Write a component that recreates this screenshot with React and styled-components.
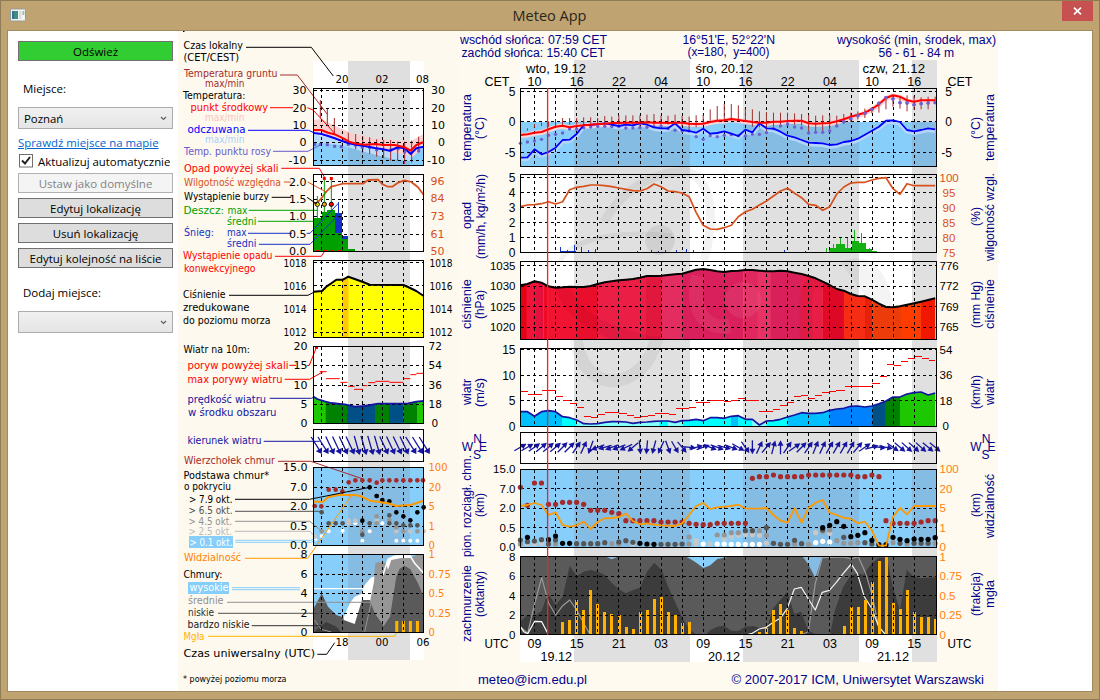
import React from 'react';
import styled, { createGlobalStyle } from 'styled-components';

const GlobalStyle = createGlobalStyle`
  *, *::before, *::after { box-sizing: border-box; }
  body { margin: 0; background: #bfa472; }
`;

/* ---------- window ---------- */

const Window = styled.div`
  width: 1100px;
  height: 700px;
  display: flex;
  flex-direction: column;
  background: #bfa472;
  border: 1px solid #8f7c56;
  padding: 0 6px 7px;
  font-family: "Open Sans", "Noto Sans", sans-serif;
  font-size: 12px;
  color: #000;
  overflow: hidden;
`;

const TitleBar = styled.header`
  height: 29px;
  flex: none;
  display: grid;
  grid-template-columns: 46px 1fr 31px;
  align-items: start;
`;

const AppIcon = styled.svg`
  display: block;
  margin: 7px 0 0 3px;
`;

const Title = styled.h1`
  margin: 0;
  padding-right: 16px;
  font-size: 14.5px;
  font-weight: 400;
  line-height: 30px;
  text-align: center;
  color: #2b251a;
`;

const CloseButton = styled.button`
  width: 31px;
  height: 20px;
  padding: 0;
  border: 0;
  display: grid;
  place-items: center;
  background: #c75050;
`;

const Client = styled.main`
  flex: 1;
  display: flex;
  align-items: flex-start;
  min-height: 0;
  background: #fff;
  border: 1px solid #a28b60;
`;

/* ---------- sidebar ---------- */

const Sidebar = styled.aside`
  width: 170px;
  flex: none;
  display: flex;
  flex-direction: column;
  padding: 10px 5px 0 10px;
`;

const Button = styled.button`
  height: 20px;
  padding: 0;
  margin-bottom: 5px;
  border: 1px solid ${(p) => (p.disabled ? '#adb2b5' : '#707070')};
  background: ${(p) => (p.$primary ? '#32cd32' : p.disabled ? '#f4f4f4' : '#dddddd')};
  color: ${(p) => (p.disabled ? '#838383' : '#000')};
  font: 400 ${(p) => p.$size || 11.5}px/17px "Open Sans", "Noto Sans", sans-serif;
  white-space: nowrap;
`;

const Label = styled.div`
  height: 20px;
  line-height: 20px;
  padding-left: 5px;
  font-size: 11.5px;
  margin-top: ${(p) => p.$top}px;
  margin-bottom: ${(p) => p.$bottom}px;
`;

const Select = styled.div`
  height: 22px;
  padding: 0 5px;
  display: flex;
  align-items: center;
  justify-content: space-between;
  border: 1px solid #acacac;
  background: linear-gradient(#f0f0f0, #e5e5e5);
  font-size: 11.4px;
`;

const MapLink = styled.a`
  height: 18px;
  margin-top: 5px;
  line-height: 18px;
  font-size: 11.4px;
  color: #0066cc;
  text-decoration: underline;
  white-space: nowrap;
`;

const CheckRow = styled.label`
  height: 16px;
  margin: 1px 0 4px;
  padding-left: 1px;
  display: flex;
  align-items: center;
  gap: 5px;
  font-size: 11.4px;
  white-space: nowrap;
`;

const CheckBox = styled.svg`
  flex: none;
`;

const Chevron = () => (
  <svg width="7" height="5" viewBox="0 0 7 5">
    <path d="M1 1l2.5 2.5L6 1" fill="none" stroke="#606060" strokeWidth="1.2" />
  </svg>
);

/* ---------- diagrams ---------- */

const Diagram = styled.svg`
  flex: none;
  display: block;
  background: ${(p) => p.$paper};
`;

const LegendText = styled.text`
  font-family: "DejaVu Sans", sans-serif;
  font-size: ${(p) => p.$size || 11}px;
`;

const ChartText = styled.text`
  font-family: "Liberation Sans", sans-serif;
  font-size: ${(p) => p.$size || 12}px;
`;

const NAVY = '#00008b';
const SKY = '#87cefa';
const SKY_NIGHT = '#84bce4';
const ORANGE = '#ff7f0e';
const RUST = '#d8501c';

const third = (ox, oy, text) => {
  const n = text.trim().split(/\s+/).map(Number);
  const out = [];
  for (let i = 0; i < n.length; i += 2) out.push([ox + n[i] / 3, oy + n[i + 1] / 3]);
  return out;
};
const str = (pts) => pts.map((p) => p.map((v) => v.toFixed(1)).join(',')).join(' ');
const hourX = (i) => 520.4 + 7.03 * i;
const hourly = (oy, text) => text.split(',').map((v, i) => [hourX(i), oy + Number(v) / 3]);

const Line = ({ p, c, w = 1, ...rest }) => (
  <polyline points={str(p)} fill="none" stroke={c} strokeWidth={w} strokeLinejoin="round" {...rest} />
);
const Area = ({ p, base, ...rest }) => (
  <polygon points={str([[p[0][0], base], ...p, [p[p.length - 1][0], base]])} {...rest} />
);
const Shape = ({ p, c }) => <polygon points={str(p)} fill={c} />;

const Grid = ({ x0, x1, y0, y1, xs, ys }) => (
  <g stroke="#000" strokeWidth="1" strokeDasharray="3 3" shapeRendering="crispEdges">
    {xs.map((x) => <line key={'x' + x} x1={x} x2={x} y1={y0} y2={y1} />)}
    {ys.map((y) => <line key={'y' + y} x1={x0} x2={x1} y1={y} y2={y} />)}
  </g>
);
const Frame = ({ x0, x1, y0, y1 }) => (
  <rect x={x0} y={y0} width={x1 - x0} height={y1 - y0} fill="none" stroke="#000" shapeRendering="crispEdges" />
);
const Sky = ({ x0, x1, y0, y1, nights }) => (
  <g shapeRendering="crispEdges">
    <rect x={x0} y={y0} width={x1 - x0} height={y1 - y0} fill={SKY} />
    {nights.map(([a, b]) => <rect key={a} x={a} y={y0} width={Math.min(b, x1) - a} height={y1 - y0} fill={SKY_NIGHT} />)}
  </g>
);
const Arrow = ({ x, y, angle, len = 14, head = 3 }) => (
  <g transform={`translate(${x} ${y}) rotate(${-angle})`}>
    <line x1={-len / 2} x2={len / 2 - 3} y1="0" y2="0" stroke="#1414a0" strokeWidth="1.3" />
    <path d={`M${len / 2} 0L${len / 2 - 5.5} ${-head}V${head}Z`} fill="#1414a0" />
  </g>
);
const Stripes = ({ ox, items, y0, y1 }) =>
  items.map(([a, b, c]) => (
    <rect key={ox + '-' + a} x={ox + a / 3} width={(b - a) / 3 + 0.3} y={y0} height={y1 - y0} fill={c} />
  ));

const Ticks = ({ x, items, anchor = 'end', c = '#000', size = 12, Font = ChartText }) =>
  items.map(([label, y, dx = 0]) => (
    <Font key={label + y} x={x + dx} y={y + size * 0.36} textAnchor={anchor} fill={c} $size={size}>{label}</Font>
  ));

const Upright = ({ x, y0, y1, children, size = 12 }) => (
  <ChartText
    transform={`rotate(-90 ${x + 4} ${y1})`} x={x + 4} y={y1} fill={NAVY} $size={size}
    textLength={y1 - y0} lengthAdjust="spacingAndGlyphs"
  >{children}</ChartText>
);

/* ---------- legend diagram ---------- */

const LEGEND_TEXT = [
  ['Czas lokalny', 183.5, 243, 49, '#000'],
  ['(CET/CEST)', 183.5, 239, 61, '#000'],
  ['Temperatura gruntu', 184, 277.5, 77, '#a52a2a'],
  ['max/min', 205, 244.5, 87, '#a52a2a', 10],
  ['Temperatura:', 183, 245.5, 99, '#000'],
  ['punkt środkowy', 190.5, 268, 111, '#f00'],
  ['max/min', 205, 244.5, 121, '#f8c4c0', 10],
  ['odczuwana', 187.5, 245.5, 133, '#00f'],
  ['max/min', 205, 244.5, 143, '#a8d0f8', 10],
  ['Temp. punktu rosy', 184, 271, 155, '#6a5acd'],
  ['Opad powyżej skali', 184, 278.5, 172, '#f00'],
  ['Wilgotność względna', 184, 281, 186, RUST],
  ['Wystąpienie burzy', 184, 269, 200, '#000'],
  ['Deszcz:', 183.5, 224, 214, '#00a000'],
  ['max', 227.5, 247.5, 214, '#00a000'],
  ['średni', 227, 256.5, 225, '#00a000'],
  ['Śnieg:', 184, 214, 236, '#1432c8'],
  ['max', 227, 246.5, 236, '#1432c8'],
  ['średni', 227, 256.5, 247, '#1432c8'],
  ['Wystąpienie opadu', 183, 272.5, 259, '#f00'],
  ['konwekcyjnego', 184, 255.5, 272, '#f00'],
  ['Ciśnienie', 183, 225.5, 298, '#000'],
  ['zredukowane', 183, 249.5, 311, '#000'],
  ['do poziomu morza', 183, 270.5, 324, '#000'],
  ['Wiatr na 10m:', 183.5, 250, 353, '#000'],
  ['poryw powyżej skali', 187.5, 288.5, 369, '#f00'],
  ['max porywy wiatru', 187.5, 282.5, 383, '#f00'],
  ['prędkość wiatru', 187.5, 266, 403, '#1414a0'],
  ['w środku obszaru', 188, 276.5, 416, '#1414a0'],
  ['kierunek wiatru', 187.5, 261.5, 444, '#1414a0'],
  ['Wierzchołek chmur', 184, 275, 464, '#a52a2a'],
  ['Podstawa chmur*', 183.5, 269, 479, '#000'],
  ['o pokryciu', 184, 231, 490, '#000'],
  ['> 7.9 okt.', 189, 232.5, 503, '#000', 10.5],
  ['> 6.5 okt.', 188.5, 232.5, 514, '#505050', 10.5],
  ['> 4.5 okt.', 188.5, 232, 525, '#909090', 10.5],
  ['> 2.5 okt.', 188.5, 232, 535, '#bababa', 10.5],
  ['> 0.1 okt.', 189.5, 232.5, 546, '#fff', 10.5],
  ['Widzialność', 184, 241, 561, '#ff7f00'],
  ['Chmury:', 183.5, 222.5, 578, '#000'],
  ['wysokie', 189.5, 228.5, 591, '#fff'],
  ['średnie', 188, 223.5, 604, '#909090'],
  ['niskie', 188, 214, 616, '#303030'],
  ['bardzo niskie', 187.5, 249.5, 628, '#202020'],
  ['Mgła', 183.5, 204.5, 640, '#ffb400'],
  ['Czas uniwersalny (UTC)', 183.5, 315, 657, '#000'],
  ['* powyżej poziomu morza', 183, 286.5, 682, '#000', 9],
];

const MX0 = 313.5;
const MX1 = 423.5;
const M_XS = [321.5, 342.5, 362.5, 382.5, 403.5];
const M_NIGHT = [[348, 410]];

const M_PANELS = [
  { y0: 88.5, y1: 165.5, ys: [90.5, 108.5, 125.5, 142.5, 160.5] },
  { y0: 174.5, y1: 251.5, ys: [181.5, 199.5, 216.5, 234.5] },
  { y0: 260.5, y1: 337.5, ys: [262.5, 285.5, 309.5, 332.5] },
  { y0: 346.5, y1: 423.5, ys: [365.5, 385.5, 404.5] },
  { y0: 429.5, y1: 461.5, ys: [] },
  { y0: 467.5, y1: 545.5, ys: [487.5, 506.5, 526.5] },
  { y0: 554.5, y1: 632.5, ys: [574.5, 593.5, 613.5] },
];

const m1 = (t) => third(178, 30, t);
const m2 = (t) => third(178, 160, t);
const m3 = (t) => third(178, 335, t);
const m4 = (t) => third(178, 500, t);

const M_RED = m1('407 300 430 300 450 308 470 313 490 322 513 335 535 341 560 344 590 342 620 345 650 345 680 352 698 362 715 345 737 336');
const M_BLUE = m1('407 309 430 312 450 318 470 325 490 332 513 340 535 344 560 348 590 354 615 358 635 362 660 352 680 355 698 372 715 355 737 350');
const M_PRESS = m2('407 395 432 393 445 380 460 370 475 359 495 359 511 350 530 357 555 366 575 374 676 375 690 381 715 393 737 408');
const M_WIND = m3('407 185 418 192 440 199 460 204 500 208 530 215 560 213 600 206 690 205 715 200 737 198');

const Dots = ({ pts, c, r = 2.3 }) => pts.map(([x, y], i) => <circle key={i} cx={x} cy={y} r={r} fill={c} />);

const MiniBars = [[427, 210, 265], [448, 235, 285], [469, 264, 310], [511, 308, 345], [533, 312, 358], [554, 318, 368], [575, 322, 372], [596, 328, 380], [617, 330, 384], [638, 330, 392], [659, 335, 392], [680, 335, 402], [701, 332, 398], [722, 320, 368]];

function LegendDiagram() {
  return (
    <Diagram $paper="#fdf9ee" width="280" height="660" viewBox="178 31 280 660">
      <rect x="183" y="31" width="1.5" height="1" />
      <rect x="313" y="61" width="111" height="599" fill="#fff" />
      <rect x="348" y="61" width="62" height="599" fill="#dfdfdf" />

      {/* temperature */}
      <Sky x0={MX0} x1={MX1} y0={142.5} y1={165.5} nights={M_NIGHT} />
      <Shape c="#f8d0d0" p={m1('407 270 430 266 455 280 490 296 530 312 580 324 640 330 700 333 737 312 737 350 700 385 640 368 560 358 490 335 450 320 407 306')} />
      <Shape c="#b8dcfa" p={m1('407 312 450 322 490 336 560 350 640 366 700 378 700 394 640 386 560 366 490 346 407 336')} />
      {MiniBars.map(([x, a, b]) => <line key={x} x1={178 + x / 3} x2={178 + x / 3} y1={30 + a / 3} y2={30 + b / 3} stroke="#a52a2a" />)}
      {m1('410 343 428 343 448 344 470 349 490 350 511 343 533 345 553 352 575 352 596 359 638 360 660 356 680 366 722 362').map(([x, y], i) => <rect key={i} x={x - 1.5} y={y - 1.5} width="3" height="3" fill="#6a5acd" />)}

      {/* precipitation */}
      <g shapeRendering="crispEdges">
        {[[407, 431, 174], [431, 447, 157], [447, 471, 150], [471, 492, 219], [492, 510, 237], [510, 531, 267]].map(([a, b, y]) => (
          <rect key={a} x={178 + a / 3} y={160 + y / 3} width={(b - a) / 3} height={(274 - y) / 3} fill="#00a000" />
        ))}
        <rect x="335" y="213" width="7" height="20" fill="#1432c8" />
        <rect x="342" y="236" width="6" height="3" fill="#1432c8" />
      </g>

      {/* pressure */}
      <Area p={M_PRESS} base={337} fill="#ff0" />
      <rect x="342.5" y="278" width="6" height="59" fill="#ffc800" />

      {/* wind speed */}
      <clipPath id="miniWind"><Area p={M_WIND} base={423.5} /></clipPath>
      <g clipPath="url(#miniWind)">
        <Stripes ox={178} y0={390} y1={424} items={[[407, 443, '#1ec800'], [443, 507, '#008200'], [507, 591, '#005088'], [591, 633, '#008200'], [633, 676, '#005088'], [676, 717, '#008200'], [717, 738, '#1ec800']]} />
      </g>

      {/* cloud base */}
      <Sky x0={MX0} x1={MX1} y0={467.5} y1={545.5} nights={M_NIGHT} />

      {/* cloud cover */}
      <Sky x0={MX0} x1={MX1} y0={554.5} y1={632.5} nights={M_NIGHT} />
      <Shape c="#fff" p={m4('495 397 498 350 515 310 530 290 550 282 560 255 580 232 615 225 630 175 650 168 697 166 710 190 737 220 737 397')} />
      <Shape c="#969696" p={m4('580 397 575 310 588 245 592 190 600 186 624 190 630 210 640 180 670 174 697 174 715 165 737 165 737 397')} />
      <Shape c="#5a5a5a" p={m4('407 325 418 305 431 280 450 320 475 345 495 352 497 360 530 372 552 300 575 300 590 340 617 378 636 350 655 230 665 206 680 197 697 208 720 250 737 290 737 397 407 397')} />
      <Shape c="#3c3c3c" p={m4('407 397 425 380 445 366 475 380 490 397')} />
      <Line c="#969696" p={m4('409 360 430 388 460 396')} />
      <Line c="#969696" p={m4('560 395 570 350 580 305')} />
      <Line c="#fff" w={1.5} p={m4('615 225 630 178 650 168 697 168 710 190 737 220')} />
      {[656, 676, 697, 718].map((x) => <rect key={x} x={178 + x / 3 - 1.4} y="621" width="3" height="11.5" fill="#ffb400" />)}

      {M_PANELS.map((p) => <Grid key={p.y0} {...p} x0={MX0} x1={MX1} xs={M_XS} />)}

      <Line p={M_BLUE} c="#00f" w={2} />
      <Line p={M_RED} c="#f00" w={2} />

      <Line c={RUST} w={1.8} p={m2('407 130 418 128 430 115 445 95 460 80 480 75 495 71 555 71 570 60 600 59 612 72 630 80 643 80 660 68 680 61 700 66 720 82 737 105')} />
      <g stroke="#00a000">
        {[[418, 108, 174], [439, 57, 157], [460, 57, 150]].map(([x, a, b]) => <line key={x} x1={178 + x / 3} x2={178 + x / 3} y1={160 + a / 3} y2={160 + b / 3} />)}
      </g>
      <line x1="338.5" x2="338.5" y1="202" y2="214" stroke="#1432c8" />
      {[439, 460].map((x) => <rect key={x} x={178 + x / 3 - 1.5} y="177" width="3" height="3" fill="#f00" />)}
      {[[418, '#ff0'], [439, '#ffa520'], [460, '#f00']].map(([x, c]) => <circle key={x} cx={178 + x / 3} cy="204.3" r="2.1" fill={c} stroke="#000" />)}
      {[418, 441, 462, 485].map((x) => <rect key={x} x={178 + x / 3 - 1.5} y="250" width="3.5" height="1.6" fill="#f00" />)}

      <Line p={M_PRESS} c="#000" w={2} />
      <Line p={M_WIND} c="#1414a0" w={1.8} />
      <g stroke="#f00">
        {[[425, 446, 110], [444, 485, 131], [487, 508, 142], [510, 530, 154], [528, 555, 163], [555, 568, 152], [571, 592, 143], [592, 634, 139], [634, 676, 142], [676, 697, 131], [697, 715, 119], [715, 737, 115]].map(([a, b, y]) => (
          <line key={a} x1={178 + a / 3} x2={178 + b / 3} y1={335 + y / 3} y2={335 + y / 3} />
        ))}
      </g>
      <rect x="315" y="346" width="3" height="3" fill="#f00" />
      {Array.from({ length: 17 }, (_, i) => (
        <Arrow key={i} x={316.5 + i * 6.75} y={445.5} len={20} head={3.6} angle={i < 2 ? -58 : i > 13 ? -58 : i > 5 && i < 10 ? -74 : -65} />
      ))}

      <Dots c="#fff" r={2} pts={m4('412 118 431 108 452 94 494 92 532 70 575 94 613 70 553 122 655 122 676 122 697 122 718 122')} />
      <Dots c="#c4c4c4" pts={m4('411 110 512 62 512 70 532 62 596 62 634 72 655 94 697 94 737 94')} />
      <Dots c="#969696" pts={m4('431 94 553 94 596 49 596 70 634 60 676 94 718 94 655 82')} />
      <Dots c="#555" pts={m4('431 37 452 70 473 70 494 70 553 104 575 70 634 46 634 70 655 70 676 76 697 76 718 76 613 4 596 -12')} />
      <Dots c="#000" pts={m4('575 -38 596 -12 613 0 634 4 553 62 655 37 676 49 697 61 718 37 737 22')} />
      <Dots c="#a52a2a" pts={m3('410 513 430 514 452 464 473 464 493 469 512 442 532 436 553 436 575 436 596 443 613 436 634 436 655 436 676 436 697 436 718 436 735 436')} />
      <Line c="#ff9900" w={2} p={m3('407 500 435 500 450 487 480 480 530 480 550 484 575 497 600 500 630 505 655 513 700 509 737 497')} />

      {/* leader lines */}
      <Line c="#000" p={m1('204 52 400 52 466 138')} />
      <Line c="#a52a2a" p={m1('306 135 358 135 425 223 448 253')} />
      <Line c="#f00" p={m1('276 233 345 233')} />
      <Line c="#f00" p={m1('388 233 405 240 470 310')} />
      <Line c="#00f" p={m1('210 301 392 301 407 308')} />
      <Line c="#6a5acd" p={m1('285 364 390 364 430 343')} />
      <Line c="#f00" p={m1('310 415 424 415 439 441')} />
      <Line c={RUST} p={m2('318 66 338 66')} />
      <Line c={RUST} p={m2('389 66 445 96')} />
      <Line c="#000" p={m2('281 112 340 112')} />
      <Line c="#000" p={m2('387 112 418 133')} />
      <Line c="#00a000" p={m2('212 151 418 151')} />
      <Line c="#00a000" p={m2('240 184 410 184')} />
      <Line c="#1432c8" p={m2('210 220 342 220')} />
      <Line c="#1432c8" p={m2('386 220 396 220 481 130')} />
      <Line c="#1432c8" p={m2('243 253 396 253 474 172')} />
      <Line c="#f00" p={m2('291 289 430 289 441 272')} />
      <Line c="#000" p={m2('153 406 390 406 407 397')} />
      <Line c="#f00" p={m3('334 91 354 91')} />
      <Line c="#f00" p={m3('387 92 394 91 415 38')} />
      <Line c="#f00" p={m3('320 133 395 133 435 110')} />
      <Line c="#1414a0" p={m3('275 190 400 190 407 187')} />
      <Line c="#1414a0" p={m3('257 319 425 319')} />
      <Line c="#a52a2a" p={m3('300 379 398 379 553 431')} />
      <Line c="#000" p={m3('171 493 395 493 575 457')} />
      <Line c="#505050" p={m4('171 34 422 34 431 37')} />
      <Line c="#909090" p={m4('171 64 395 64 430 92')} />
      <Line c="#bababa" p={m4('171 94 396 94 410 110')} />
      <rect x="189" y="536" width="44" height="12" fill={SKY} />
      <Line c={SKY} p={m4('172 121 398 121 412 115')} />
      <Line c={SKY} p={m4('172 127 400 127 412 120')} />
      <Line c="#ff9900" p={m4('201 175 389 175 520 -13')} />
      <rect x="188" y="582" width="41" height="12" fill={SKY} />
      <Line c={SKY} p={m4('162 263 366 263')} />
      <Line c={SKY} p={m4('162 269 366 269')} />
      <Line c="#fff" w={1.2} p={m4('387 266 560 266')} />
      <Line c="#909090" p={m4('147 307 580 307')} />
      <Line c="#505050" p={m4('120 340 430 340')} />
      <Line c="#303030" p={m4('221 377 430 377')} />
      <Line c="#ffb400" p={m4('90 409 650 409 656 396')} />
      <Line c="#000" p={m4('418 463 446 463 470 428')} />

      {M_PANELS.map((p) => <Frame key={p.y0} {...p} x0={MX0} x1={MX1} />)}
      {LEGEND_TEXT.map(([t, a, b, y, c, s]) => (
        <LegendText key={t + y} x={a} y={y} fill={c} $size={s} textLength={b - a} lengthAdjust="spacingAndGlyphs">{t}</LegendText>
      ))}

      <g>
        <Ticks Font={LegendText} size={11} x={306.5} items={[['30', 90.5], ['20', 108], ['10', 125], ['0', 142.5], ['-10', 160], ['2.0', 181.7], ['1.5', 199], ['1.0', 216.5], ['0.5', 234], ['0.0', 251]]} />
        <Ticks Font={LegendText} size={11} x={445} items={[['30', 90.5], ['20', 108], ['10', 125], ['0', 142.5], ['-10', 160]]} />
        <Ticks Font={LegendText} size={11} x={430.5} anchor="start" c={RUST} items={[['96', 181], ['84', 198.5], ['73', 216], ['61', 234], ['50', 251]]} />
        {[262.5, 285.5, 309, 332].map((y, i) => (
          <React.Fragment key={y}>
            <LegendText $size={11} x="283.5" y={y + 4} textLength="23" lengthAdjust="spacingAndGlyphs">{1018 - 2 * i}</LegendText>
            <LegendText $size={11} x="429.5" y={y + 4} textLength="23" lengthAdjust="spacingAndGlyphs">{1018 - 2 * i}</LegendText>
          </React.Fragment>
        ))}
        <Ticks Font={LegendText} size={11} x={307.5} items={[['20', 346.5], ['15', 365.5], ['10', 385.5], ['5', 404.5], ['0', 423.5], ['15.0', 467.5], ['7.0', 487.5], ['2.0', 506.5], ['0.5', 526.3], ['0.0', 545], ['8', 554.5], ['6', 574], ['4', 593.5], ['2', 613.5], ['0', 632.5]]} />
        <Ticks Font={LegendText} size={10.5} x={428.5} anchor="start" items={[['72', 346], ['54', 365.5], ['36', 385.5], ['18', 404.5], ['0', 423.5, 3]]} />
        <Ticks Font={LegendText} size={10} x={428.5} anchor="start" c={ORANGE} items={[['100', 467.5], ['20', 487.5], ['5', 506.5], ['1', 526.5], ['0', 545.5], ['1', 554.5], ['0.75', 574.5], ['0.5', 593.5], ['0.25', 613.5], ['0', 632.5]]} />
        {[['20', 342, 78.5], ['02', 382, 78.5], ['08', 422.5, 78.5], ['18', 342, 641.7], ['00', 382, 641.7], ['06', 423, 641.7]].map(([t, x, y]) => (
          <LegendText key={t} $size={11} x={x} y={y + 4} textAnchor="middle" textLength="13" lengthAdjust="spacingAndGlyphs">{t}</LegendText>
        ))}
      </g>
    </Diagram>
  );
}

/* ---------- forecast diagram ---------- */

const FX0 = 520.5;
const FX1 = 936.5;
const F_XS = Array.from({ length: 19 }, (_, k) => Math.round(534 + 21.1 * k) + 0.5);
const F_NIGHTS = [[574, 690], [743, 859], [912, 937]];
const F_PANELS = [
  { y0: 88.5, y1: 166.5, ys: [91.5, 121.5, 152.5] },
  { y0: 174.5, y1: 252.5, ys: [177.5, 192.5, 207.5, 222.5, 237.5] },
  { y0: 261.5, y1: 339.5, ys: [265.5, 286.5, 306.5, 327.5] },
  { y0: 348.5, y1: 426.5, ys: [349.5, 375.5, 400.5] },
  { y0: 432.5, y1: 463.5, ys: [] },
  { y0: 469.5, y1: 547.5, ys: [488.5, 508.5, 527.5] },
  { y0: 556.5, y1: 634.5, ys: [576.5, 595.5, 615.5] },
];

const TEMP = hourly(30, '315,313,308,306,298,290,287,292,288,286,284,282,281,279,279,278,278,278,277,278,278,279,278,278,281,282,281,276,272,271,267,270,273,276,278,278,275,275,273,272,272,280,281,280,279,274,268,260,254,248,237,223,204,196,200,211,215,211,211,211');
const FELT = hourly(30, '383,382,358,373,366,353,330,329,312,285,285,282,280,284,288,284,286,280,284,292,295,295,280,300,303,308,296,311,309,304,311,318,299,307,280,295,296,305,317,322,330,338,339,340,345,343,336,333,326,314,302,290,272,271,276,300,304,300,295,298');
const DEW = hourly(30, '340,336,333,328,316,313,309,297,297,293,291,289,289,290,290,294,294,293,292,290,288,296,301,303,303,320,328,317,320,316,314,317,318,313,313,308,296,288,282,291,294,309,307,307,303,288,275,266,257,250,238,220,203,207,218,219,224,221,219,218');
const HUMID = hourly(30, '530,525,524,521,515,522,515,479,472,469,465,465,467,470,474,478,482,483,476,462,470,483,485,489,500,547,586,597,598,593,586,560,545,538,525,513,498,483,475,490,503,523,526,541,530,492,471,459,457,457,450,445,443,476,493,461,467,467,467,467');
const PRESS = hourly(255, '91,87,79,83,94,98,97,95,96,96,93,87,82,79,76,74,72,68,63,63,62,60,58,56,50,44,42,45,49,51,48,47,45,45,47,49,49,47,49,53,57,63,70,80,90,102,107,117,123,124,134,146,156,157,154,149,145,140,135,130');
const WIND = hourly(255, '470,470,484,470,467,470,485,488,495,506,507,506,502,500,500,501,505,502,501,499,498,498,502,497,496,493,497,488,488,490,484,482,493,493,510,498,497,493,486,480,473,475,475,473,466,462,460,454,453,456,453,446,438,426,426,417,413,411,420,414');
const VIS = hourly(460, '138,135,129,135,165,157,195,200,196,185,207,186,175,174,171,161,183,193,190,194,196,197,198,190,165,138,129,147,142,140,138,134,145,146,146,144,165,182,188,145,188,143,128,120,158,165,174,176,190,185,212,257,257,170,144,163,138,138,138,138');
const TOPS = hourly(460, '82,136,69,69,133,133,127,127,127,133,151,151,151,157,161,182,182,182,182,182,186,186,186,186,190,193,194,194,190,190,190,190,190,55,50,50,45,50,50,50,50,45,45,45,45,45,45,45,50,50,45,50,182,190,190,190,190,186,182,182');

const GROUND = [
  [1, 295, 302], [2, 282, 292], [3, 278, 288], [4, 274, 290], [5, 268, 290], [6, 264, 288], [7, 264, 284], [8, 264, 284], [9, 262, 286], [10, 262, 284], [11, 264, 282], [12, 258, 284], [13, 260, 288], [14, 256, 288], [15, 256, 286], [16, 256, 286], [17, 256, 290], [18, 254, 284], [19, 252, 286], [20, 257, 284], [21, 257, 284], [22, 254, 286], [23, 257, 288], [24, 260, 306], [25, 256, 292], [26, 254, 282], [27, 238, 272], [28, 228, 275], [29, 222, 274], [30, 222, 272], [31, 226, 274], [32, 236, 276], [33, 238, 290], [34, 244, 292], [35, 246, 306], [36, 248, 290], [37, 248, 288], [38, 248, 286], [39, 250, 284], [40, 252, 286], [41, 255, 310], [42, 257, 304], [43, 256, 304], [44, 256, 304], [45, 257, 290], [46, 252, 282], [47, 248, 276], [48, 244, 268], [49, 236, 264], [50, 232, 250], [51, 214, 248], [52, 205, 238], [53, 198, 230], [54, 200, 236], [55, 196, 244], [56, 198, 240], [57, 202, 238], [58, 200, 238], [59, 200, 222],
];

const K = '#000';
const D = '#555';
const G = '#969696';
const L = '#c8c8c8';
const W = '#fff';
const CLOUD_BASE = [
  [0, 252, G], [0, 240, D], [1, 252, L], [1, 245, D], [1, 232, K], [2, 252, L], [2, 243, D], [3, 250, L], [3, 239, D], [4, 252, D], [4, 239, K],
  [5, 252, G], [5, 240, D], [5, 228, K], [6, 250, K], [7, 250, K], [8, 251, D], [9, 251, D], [10, 251, D], [11, 251, D], [12, 248, D], [13, 251, G],
  [14, 252, G], [14, 246, D], [15, 242, D], [16, 252, L], [16, 247, D], [17, 250, K], [18, 252, K], [19, 253, K], [20, 253, D], [21, 253, D], [22, 253, D], [23, 252, D],
  [24, 252, G], [24, 231, G], [25, 252, L], [25, 242, L], [26, 252, W], [27, 252, L], [28, 252, W], [28, 225, G], [29, 252, W], [29, 236, L], [29, 225, G],
  [30, 253, W], [30, 230, L], [30, 218, G], [31, 253, W], [31, 226, L], [31, 218, G], [32, 253, W], [32, 224, L], [32, 212, D], [33, 253, W], [33, 224, L], [33, 212, D], [34, 253, W], [34, 226, L], [34, 212, G],
  [35, 250, L], [35, 226, G], [35, 203, D], [36, 250, D], [37, 253, D], [38, 253, D], [39, 252, G], [39, 241, D], [40, 251, D], [41, 253, G], [42, 248, W], [42, 218, L],
  [43, 244, W], [43, 214, G], [43, 210, D], [43, 203, K], [44, 246, W], [44, 220, L], [44, 210, G], [44, 196, K], [45, 242, G], [45, 185, K], [46, 250, G], [46, 232, D], [46, 199, K],
  [47, 250, G], [47, 230, K], [48, 248, G], [48, 226, K], [49, 248, D], [49, 218, K], [50, 252, D], [50, 241, K], [51, 254, K], [52, 254, K], [53, 248, G], [53, 232, K], [54, 250, D], [54, 238, K],
  [55, 252, G], [55, 242, K], [56, 250, D], [56, 237, K], [57, 250, D], [57, 238, K], [58, 250, D], [58, 238, K], [59, 250, G], [59, 233, K],
];

const ANGLES = [30, 30, 35, 40, 40, 40, 45, 45, 55, 65, 250, 200, 195, 200, 200, 205, 220, 275, 265, 255, 245, 290, 300, 310, -5, 15, 20, -20, -20, -15, -20, -30, -55, -90, 65, 50, 75, 90, 55, 35, 45, 55, 68, 65, 60, 60, 60, 60, 50, 35, 15, -5, -12, -35, -40, -42, -42, -42, -40, -40];

const GUSTS_A = [[193, 215, 409], [215, 257, 418], [257, 299, 406], [299, 320, 424], [320, 341, 436], [341, 362, 445], [362, 383, 457], [383, 404, 484], [404, 425, 487], [425, 446, 478], [446, 490, 472], [490, 512, 475], [512, 533, 481], [533, 554, 487], [554, 575, 484], [575, 596, 481], [596, 638, 475], [638, 659, 478], [659, 700, 460], [700, 721, 457], [721, 763, 442], [763, 805, 437]];
const GUSTS_B = [[13, 34, 439], [34, 55, 436], [55, 76, 430], [76, 118, 436], [118, 160, 469], [160, 181, 463], [181, 202, 451], [202, 223, 442], [223, 244, 424], [244, 265, 421], [265, 286, 430], [286, 307, 421], [307, 328, 412], [328, 349, 409], [349, 374, 406], [374, 457, 394], [457, 479, 385], [479, 500, 364], [500, 521, 328], [521, 542, 331], [542, 563, 319], [563, 584, 310], [584, 605, 304], [605, 626, 310], [626, 646, 316]];

const FOG = [
  ...third(456, 460, '320 485 341 481 362 421 383 450 404 391 425 433 446 455 467 462 491 466 511 500 533 508 553 455 574 450 595 418 617 412 638 455 659 466 680 490 700 485'),
  ...third(720, 460, '118 516 139 503 160 451 181 433 202 451 223 505 244 514 373 499 394 440 415 440 436 421 457 365 478 304 499 292 520 430 541 448 562 391 583 455 604 472 625 472 645 478'),
];

const a6 = (t) => third(456, 460, t);
const b6 = (t) => third(720, 460, t);

const Compass = ({ x }) => (
  <g fill={NAVY} textAnchor="middle">
    <ChartText x={x - 9.5} y="450.5">W</ChartText>
    <ChartText x={x + 0.5} y="443">N</ChartText>
    <ChartText x={x + 6} y="450.5">E</ChartText>
    <ChartText x={x} y="459">S</ChartText>
  </g>
);

const HEADINGS = [
  ['wschód słońca: 07:59 CET', 460, 607, 44],
  ['zachód słońca: 15:40 CET', 461.5, 605, 56.5],
  ["16°51'E, 52°22'N", 682.5, 775, 44],
  ['(x=180,\u00a0 y=400)', 687.5, 769.5, 56],
  ['wysokość (min, środek, max)', 837, 996, 44],
  ['56 - 61 - 84 m', 878.5, 954, 56.5],
  ['meteo@icm.edu.pl', 478, 587, 684],
  ['© 2007-2017 ICM, Uniwersytet Warszawski', 731.5, 984, 684],
];

const DATES = [
  ['wto, 19.12', 526, 586, 73], ['śro, 20.12', 695.5, 753, 73], ['czw, 21.12', 862.5, 925, 73],
  ['CET', 484.5, 509.5, 85.5], ['CET', 947.5, 972.5, 85.5],
  ['UTC', 484.5, 508.5, 648], ['UTC', 947.5, 971.5, 648],
  ['19.12', 540.5, 572, 661], ['20.12', 708, 740, 661], ['21.12', 877, 909, 661],
];

function ForecastDiagram() {
  return (
    <Diagram $paper="#fffaf0" width="540" height="660" viewBox="458 31 540 660">
      <rect x="520" y="60" width="417" height="602" fill="#fff" />
      {F_NIGHTS.map(([a, b]) => <rect key={a} x={a} y="60" width={b - a} height="602" fill="#e0e0e0" />)}

      <g fill="none" stroke="#000" strokeOpacity="0.05">
        <path d="M604 222C620 192 650 172 686 171C712 180 716 215 704 260" strokeWidth="9" />
        <path d="M560 262C566 246 600 228 672 236" strokeWidth="5" />
        <path d="M575 330C578 372 600 384 620 380C645 374 655 350 659 330" strokeWidth="13" />
      </g>
      <circle cx="660" cy="240" r="15" fill="#000" fillOpacity="0.07" />
      <path d="M840 262C865 250 890 265 893 312L868 300Z" fill="#000" fillOpacity="0.045" />

      {/* temperature */}
      <Sky x0={FX0} x1={FX1} y0={121.5} y1={166.5} nights={F_NIGHTS} />
      <Line p={FELT.map(([x, y]) => [x, y + 1.4])} c="#b4d6fb" w={4.5} />
      <Line p={TEMP.map(([x, y]) => [x, y + 0.6])} c="#fbd3d6" w={5} />

      {/* pressure */}
      <clipPath id="press"><Area p={PRESS} base={339.5} /></clipPath>
      <g clipPath="url(#press)">
        <Stripes ox={456} y0={262} y1={340} items={[[193, 212, '#e60014'], [212, 240, '#f01438'], [240, 262, '#e6103c'], [262, 275, '#ee0a28'], [275, 362, '#f01432'], [362, 425, '#e90f2c'], [425, 570, '#eb1e46'], [570, 617, '#e0183e'], [617, 680, '#e32c60'], [680, 793, '#da205c']]} />
        <Stripes ox={720} y0={262} y1={340} items={[[0, 70, '#da205c'], [70, 113, '#df2860'], [113, 152, '#e63264'], [152, 245, '#da205a'], [245, 307, '#e81e46'], [307, 372, '#e30a28'], [372, 435, '#f52d14'], [435, 457, '#e6230a'], [457, 545, '#eb3c0a'], [545, 603, '#ff3c00'], [603, 649, '#f01800']]} />
        <g fill="none">
          <path d="M560 262C555 310 600 336 665 345" stroke="#b00020" strokeOpacity="0.14" strokeWidth="14" />
          <path d="M698 276C690 312 706 330 730 326" stroke="#fff" strokeOpacity="0.06" strokeWidth="14" />
          <path d="M806 340V298C806 275 836 275 836 304V340" stroke="#b00020" strokeOpacity="0.1" strokeWidth="13" />
        </g>
        <circle cx="743" cy="300" r="18" fill="#fff" fillOpacity="0.07" />
      </g>

      {/* wind speed */}
      <clipPath id="wind"><Area p={WIND} base={426.5} /></clipPath>
      <g clipPath="url(#wind)">
        <Stripes ox={456} y0={390} y1={427} items={[[193, 318, '#00bfff'], [318, 362, '#00ffff'], [362, 610, '#84ffff'], [610, 636, '#00ffff'], [636, 680, '#84ffff'], [680, 793, '#00ffff']]} />
        <Stripes ox={720} y0={390} y1={427} items={[[0, 33, '#00ffff'], [33, 55, '#00bfff'], [55, 97, '#00ffff'], [97, 139, '#84ffff'], [139, 202, '#00ffff'], [202, 328, '#00bfff'], [328, 457, '#0082ff'], [457, 497, '#005088'], [497, 540, '#008200'], [540, 649, '#1ec800']]} />
      </g>

      {/* cloud base and cloud cover backgrounds */}
      <Sky x0={FX0} x1={FX1} y0={469.5} y1={547.5} nights={F_NIGHTS} />
      <rect x={FX0} y="556.5" width={FX1 - FX0} height="78" fill="#5a5a5a" />
      <Shape c={SKY} p={a6('690 290 702 296 721 308 742 324 763 316 784 297 815 291')} />
      <Shape c={SKY_NIGHT} p={a6('452 291 467 298 484 291')} />
      <Shape c={SKY_NIGHT} p={b6('248 290 265 313 286 354 307 290')} />
      <Shape c="#3c3c3c" p={a6('193 485 215 464 236 468 257 452 275 400 299 435 320 410 341 318 362 348 383 335 404 330 425 335 446 345 467 368 488 388 510 400 531 390 552 383 573 335 595 308 617 330 638 385 659 430 680 475 700 508 721 524 193 524')} />
      <Shape c="#3c3c3c" p={[...a6('750 524 763 510 784 500 805 497'), ...b6('34 512 55 513 76 500 100 498 139 510 160 445 202 395 223 462 244 455 265 512 290 524')]} />
      <Shape c="#3c3c3c" p={b6('330 524 345 450 370 380 391 348 412 340 430 345 455 310 476 295 500 291 518 380 540 450 560 330 581 350 602 355 648 352 648 524')} />
      <Line c="#9a9a9a" w={1.2} p={a6('193 500 215 520 236 430 257 353 278 430 299 465 320 437 341 420 362 450 383 490 400 520')} />
      <Line c="#fff" w={1.2} p={a6('193 500 203 515 215 521 236 484 257 485 275 520')} />
      <Line c="#9a9a9a" w={1.2} p={b6('250 522 265 515 286 370 307 293 370 291 394 297 415 290 437 340 455 400 476 500')} />
      <Line c="#f4f4f4" w={1.2} p={b6('85 523 97 520 118 507 139 502 160 487 181 475 202 445 223 387 244 382 265 417 286 450 307 397 328 391 349 367 370 340 394 312 412 340 433 410 455 445 476 500 495 522')} />
      {FOG.map(([x, y]) => <rect key={x} x={x - 1.5} y={y} width="3" height={634.5 - y} fill="#ffb000" shapeRendering="crispEdges" />)}

      {/* precipitation */}
      <g fill="#14b014" shapeRendering="crispEdges">
        {[[328, 348, 654], [348, 375, 643], [375, 395, 654], [395, 417, 633], [417, 438, 639], [438, 455, 656], [455, 470, 664]].map(([a, b, y]) => (
          <rect key={a} x={720 + a / 3} width={(b - a) / 3} y={30 + y / 3} height={(668 - y) / 3} />
        ))}
        {[[319, 655], [340, 643], [361, 624], [382, 624], [403, 600], [424, 610], [446, 654]].map(([x, y]) => (
          <rect key={x} x={720 + x / 3} width="1" y={30 + y / 3} height={(668 - y) / 3} />
        ))}
      </g>
      <g fill="#1432c8" shapeRendering="crispEdges">
        {[[311, 651], [332, 659], [353, 646], [374, 650], [395, 659], [416, 657], [544, 664], [586, 659], [607, 664], [628, 659], [660, 661], [691, 657], [712, 661], [985, 660], [1048, 663]].map(([x, y]) => (
          <rect key={x} x={456 + x / 3} width="1" y={30 + y / 3} height={(668 - y) / 3} />
        ))}
        <rect x="561" y="251" width="15" height="1" />
      </g>

      {F_PANELS.map((p) => <Grid key={p.y0} {...p} x0={FX0} x1={FX1} xs={F_XS} />)}

      {GROUND.map(([i, a, b]) => <line key={i} x1={hourX(i)} x2={hourX(i)} y1={30 + a / 3} y2={30 + b / 3} stroke="#a03030" />)}
      <Dots pts={DEW} c="#7060d0" r={1.7} />
      <Line p={FELT} c="#00f" w={1.8} />
      <Line p={TEMP} c="#f00" w={2} />
      <Dots pts={DEW.slice(46, 60)} c="#7060d0" r={1.7} />
      <Line p={HUMID} c={RUST} w={1.7} />
      <Line p={PRESS} c="#000" w={2} />
      <Line p={WIND} c="#1414a0" w={1.7} />
      <g stroke="#f00" shapeRendering="crispEdges">
        {GUSTS_A.map(([a, b, y]) => <line key={a} x1={456 + a / 3} x2={456 + b / 3} y1={255 + y / 3} y2={255 + y / 3} />)}
        {GUSTS_B.map(([a, b, y]) => <line key={a} x1={720 + a / 3} x2={720 + b / 3} y1={255 + y / 3} y2={255 + y / 3} />)}
      </g>
      {ANGLES.map((angle, i) => <Arrow key={i} x={hourX(i)} y={447.3} angle={angle} />)}
      {CLOUD_BASE.map(([i, y, c], n) => <circle key={n} cx={hourX(i)} cy={460 + y / 3} r="2.6" fill={c} />)}
      <Dots pts={TOPS} c="#a52a2a" r={2.6} />
      <Line p={VIS} c="#ff9900" w={1.8} />

      {F_PANELS.map((p) => <Frame key={p.y0} {...p} x0={FX0} x1={FX1} />)}
      <line x1="547.6" x2="547.6" y1="88" y2="635" stroke="#ff1e1e" strokeWidth="1.3" />

      {HEADINGS.map(([t, a, b, y]) => (
        <ChartText key={t} x={a} y={y} fill={NAVY} textLength={b - a} lengthAdjust="spacingAndGlyphs">{t}</ChartText>
      ))}
      {DATES.map(([t, a, b, y]) => (
        <ChartText key={t + a} $size={13} x={a} y={y} textLength={b - a} lengthAdjust="spacingAndGlyphs">{t}</ChartText>
      ))}
      {['10', '16', '22', '04', '10', '16', '22', '04', '10', '16'].map((t, i) => (
        <ChartText key={i} $size={12.5} x={534.5 + 42.2 * i} y="85.5" textAnchor="middle">{t}</ChartText>
      ))}
      {['09', '15', '21', '03', '09', '15', '21', '03', '09', '15'].map((t, i) => (
        <ChartText key={i} $size={12.5} x={534.5 + 42.2 * i} y="648" textAnchor="middle">{t}</ChartText>
      ))}

      <Ticks x={515.5} items={[['5', 91.5], ['0', 121.7], ['-5', 152.5], ['5', 177.5], ['4', 192.5], ['3', 207.5], ['2', 222.5], ['1', 237.5], ['0', 252.5], ['15', 350], ['10', 375.3], ['5', 401], ['0', 426.3]]} />
      <Ticks x={515.5} size={11.5} items={[['1035', 266], ['1030', 286.3], ['1025', 306.7], ['1020', 327], ['15.0', 469], ['7.0', 488.5], ['2.0', 508], ['0.5', 527.5], ['0.0', 547], ['8', 556.5], ['6', 576], ['4', 595.5], ['2', 615.3], ['0', 634.5]]} />
      <Ticks x={952} items={[['5', 91.5], ['0', 121.7], ['-5', 152.5]]} />
      <Ticks x={942.5} size={11.5} anchor="start" c={RUST} items={[['100', 177.5, -3], ['95', 192.5], ['90', 207.5], ['85', 222.5], ['80', 237.5], ['75', 252.5]]} />
      <Ticks x={939.5} size={11.5} anchor="start" items={[['776', 266], ['772', 286.3], ['769', 306.7], ['765', 327], ['54', 350], ['36', 375.3], ['18', 401], ['0', 426.3, 3]]} />
      <Ticks x={939.5} size={11.5} anchor="start" c={ORANGE} items={[['100', 469], ['20', 488.5], ['5', 508], ['1', 527.5], ['0', 547], ['1', 556.5], ['0.75', 576], ['0.5', 595.5], ['0.25', 615.3], ['0', 634.5]]} />

      <Upright x={467} y0={94} y1={161}>temperatura</Upright>
      <Upright x={480} y0={117} y1={139}>(°C)</Upright>
      <Upright x={467} y0={202} y1={229}>opad</Upright>
      <Upright x={481} y0={174} y1={259}>(mm/h, kg/m²/h)</Upright>
      <Upright x={467} y0={279} y1={329}>ciśnienie</Upright>
      <Upright x={480} y0={290} y1={319}>(hPa)</Upright>
      <Upright x={467} y0={379} y1={405}>wiatr</Upright>
      <Upright x={480} y0={378} y1={407}>(m/s)</Upright>
      <Upright x={467} y0={455} y1={557}>pion. rozciągł. chm.</Upright>
      <Upright x={480} y0={493} y1={517}>(km)</Upright>
      <Upright x={467} y0={565} y1={642}>zachmurzenie</Upright>
      <Upright x={480} y0={571} y1={617}>(oktanty)</Upright>
      <Upright x={976} y0={117} y1={139}>(°C)</Upright>
      <Upright x={990} y0={94} y1={161}>temperatura</Upright>
      <Upright x={976} y0={207} y1={226}>(%)</Upright>
      <Upright x={990} y0={173} y1={261}>wilgotność wzgl.</Upright>
      <Upright x={976} y0={281} y1={328}>(mm Hg)</Upright>
      <Upright x={990} y0={279} y1={329}>ciśnienie</Upright>
      <Upright x={976} y0={375} y1={409}>(km/h)</Upright>
      <Upright x={990} y0={379} y1={405}>wiatr</Upright>
      <Upright x={976} y0={493} y1={517}>(km)</Upright>
      <Upright x={990} y0={474} y1={538}>widzialność</Upright>
      <Upright x={976} y0={572} y1={616}>(frakcja)</Upright>
      <Upright x={990} y0={580} y1={608}>mgła</Upright>
      <Compass x={477} />
      <Compass x={985.5} />
    </Diagram>
  );
}

export default function App() {
  return (
    <>
      <GlobalStyle />
      <Window>
        <TitleBar>
          <AppIcon width="16" height="14" viewBox="0 0 16 14">
            <rect x="0.5" y="1" width="15" height="12" rx="1" fill="#f4f4f4" stroke="#9a9a94" />
            <rect x="2" y="3" width="6" height="8" fill="#3f9080" />
            <path d="M2 3h2v8H2z" fill="#356f9c" />
            <rect x="9" y="3" width="2.5" height="8" fill="#dcdcdc" />
            <rect x="12.5" y="3" width="1.8" height="4" fill="#8cc4a8" />
          </AppIcon>
          <Title>Meteo App</Title>
          <CloseButton aria-label="Zamknij">
            <svg width="9" height="8" viewBox="0 0 9 8">
              <path d="M1 0.7L8 7.3M8 0.7L1 7.3" stroke="#fff" strokeWidth="1.7" />
            </svg>
          </CloseButton>
        </TitleBar>
        <Client>
          <Sidebar>
            <Button $primary>Odśwież</Button>
            <Label $top={13} $bottom={8}>Miejsce:</Label>
            <Select>Poznań<Chevron /></Select>
            <MapLink>Sprawdź miejsce na mapie</MapLink>
            <CheckRow>
              <CheckBox width="14" height="14" viewBox="0 0 14 14">
                <rect x="0.5" y="0.5" width="13" height="12.5" fill="#fff" stroke="#707070" />
                <path d="M3 6.5l3 3L11 3" fill="none" stroke="#212121" strokeWidth="2" />
              </CheckBox>
              Aktualizuj automatycznie
            </CheckRow>
            <Button disabled>Ustaw jako domyślne</Button>
            <Button>Edytuj lokalizację</Button>
            <Button>Usuń lokalizację</Button>
            <Button>Edytuj kolejność na liście</Button>
            <Label $top={10} $bottom={8}>Dodaj miejsce:</Label>
            <Select><span /><Chevron /></Select>
          </Sidebar>
          <LegendDiagram />
          <ForecastDiagram />
        </Client>
      </Window>
    </>
  );
}
